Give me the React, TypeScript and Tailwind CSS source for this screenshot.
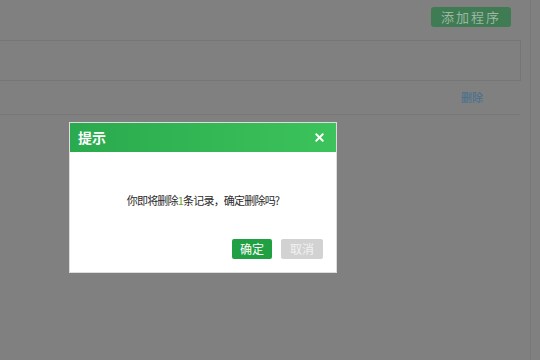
import { X } from "lucide-react";

const cjk = { fontFamily: '"Noto Sans CJK SC", "Noto Sans", sans-serif' };

export default function App() {
  return (
    <div className="relative w-[540px] h-[360px] overflow-hidden bg-[#808080]" style={cjk}>
      {/* dimmed page underneath */}
      <div className="w-[531px] h-full border-r border-[#777777] flex flex-col">
        <div className="h-[40px] flex items-start justify-end pt-[7px] pr-[19px]">
          <button className="w-[80px] h-[20px] rounded-[3px] bg-[#3f7b53] text-[#9cb7a3] text-[13px] leading-[20px] tracking-[2px]">
            添加程序
          </button>
        </div>
        <div className="w-[522px] -ml-px h-[41px] border border-[#767676]" />
        <div className="w-[520px] h-[34px] border-b border-[#777777] flex items-center justify-end pr-[37px]">
          <span className="text-[11px] font-medium text-[#4a728c]">删除</span>
        </div>
      </div>

      {/* dialog */}
      <div className="absolute left-[69px] top-[122px] w-[268px] h-[151px] bg-white border border-[#dddddd] flex flex-col">
        <div className="h-[29px] flex items-center justify-between pl-[8px] pr-[10px] bg-gradient-to-r from-[#29aa4e] to-[#3cc35b]">
          <span className="text-white font-bold text-[14px]">提示</span>
          <X className="w-[13px] h-[13px] text-white" strokeWidth={3.5} />
        </div>
        <div className="flex-1 flex items-center justify-center pt-[10px] text-[11px] tracking-[-0.8px] text-[#2a2a2a]">
          你即将删除<span className="text-[#6aa82a]">1</span>条记录，确定删除吗?
        </div>
        <div className="flex justify-end gap-[9px] pr-[13px] pb-[13px]">
          <button className="w-[40px] h-[20px] rounded-[2px] bg-[#21a043] text-white text-[12px] leading-[20px]">
            确定
          </button>
          <button className="w-[42px] h-[20px] rounded-[2px] bg-[#d2d2d2] text-[#f2f2f2] text-[12px] leading-[20px]">
            取消
          </button>
        </div>
      </div>
    </div>
  );
}
